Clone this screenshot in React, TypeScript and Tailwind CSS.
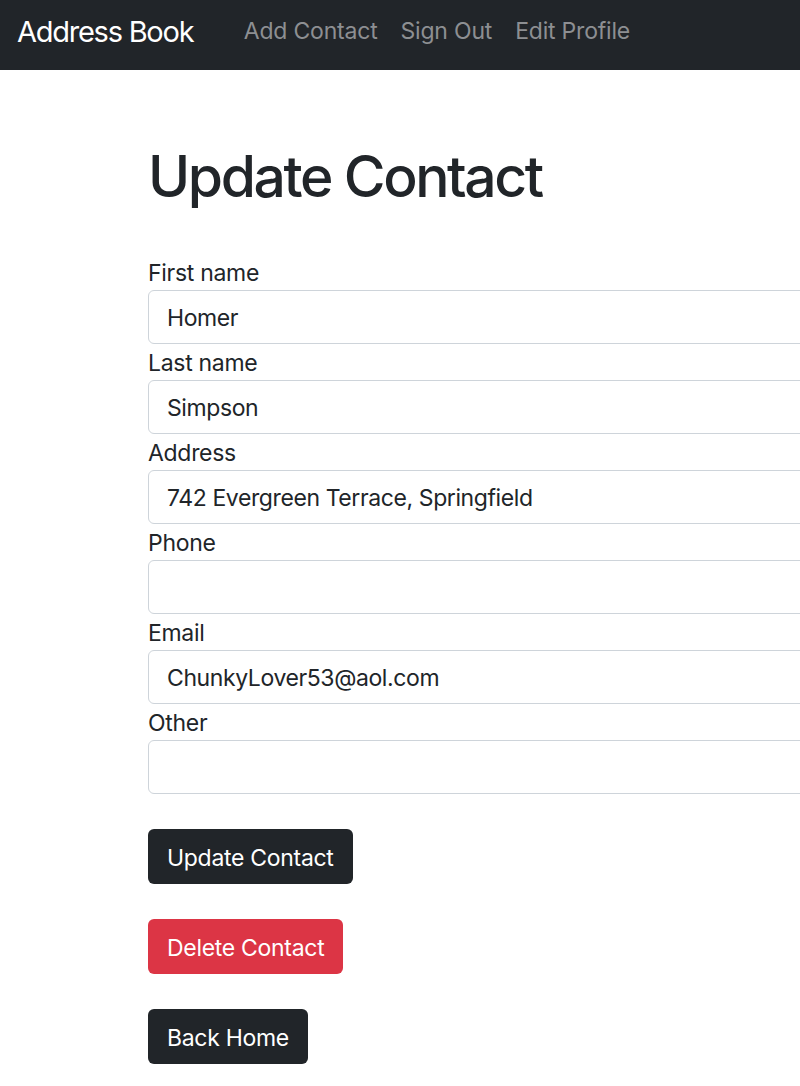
import React from 'react';

const fields = [
  { label: 'First name', value: 'Homer' },
  { label: 'Last name', value: 'Simpson' },
  { label: 'Address', value: '742 Evergreen Terrace, Springfield' },
  { label: 'Phone', value: '' },
  { label: 'Email', value: 'ChunkyLover53@aol.com' },
  { label: 'Other', value: '' },
];

export default function App() {
  return (
    <div className="w-[800px] min-h-[1086px] overflow-hidden bg-white text-[#212529] font-['Inter',sans-serif]">
      {/* Navbar */}
      <nav className="h-[70px] bg-[#212529] flex items-center px-[17px] pb-[8px]">
        <span className="text-[29px] leading-[45px] text-white mr-[39px] tracking-[-1.25px]">Address Book</span>
        <div className="flex items-center">
          <span className="px-[11.5px] text-[23px] leading-[36px] text-[#8d8f92] tracking-[-0.2px]">Add Contact</span>
          <span className="px-[11.5px] text-[23px] leading-[36px] text-[#8d8f92] tracking-[-0.2px]">Sign Out</span>
          <span className="px-[11.5px] text-[23px] leading-[36px] text-[#8d8f92] tracking-[-0.2px]">Edit Profile</span>
        </div>
      </nav>

      {/* Form */}
      <div className="pl-[148px] pt-[71px]">
        <h1 className="text-[57px] leading-[72px] font-medium tracking-[-2.4px] mb-[41px]">Update Contact</h1>

        <div className="flex flex-col">
          {fields.map((f) => (
            <div key={f.label} className="flex flex-col">
              <label className="text-[23px] leading-[36px] tracking-[-0.3px] pt-[1px] -mb-[1px]">{f.label}</label>
              <div className="w-[720px] h-[54px] border border-[#ced4da] rounded-[6px] px-[18px] pt-[3px] flex items-center text-[23px] tracking-[-0.4px]">
                {f.value}
              </div>
            </div>
          ))}
        </div>

        <div className="flex flex-col items-start gap-[35px] mt-[35px]">
          <button className="h-[55px] px-[19px] pt-[3px] bg-[#212529] text-white text-[23px] rounded-[6px] tracking-[-0.3px]">
            Update Contact
          </button>
          <button className="h-[55px] px-[19px] pt-[3px] bg-[#dc3545] text-white text-[23px] rounded-[6px] tracking-[-0.3px]">
            Delete Contact
          </button>
          <button className="h-[55px] px-[19px] pt-[3px] bg-[#212529] text-white text-[23px] rounded-[6px] tracking-[-0.3px]">
            Back Home
          </button>
        </div>
      </div>
    </div>
  );
}
